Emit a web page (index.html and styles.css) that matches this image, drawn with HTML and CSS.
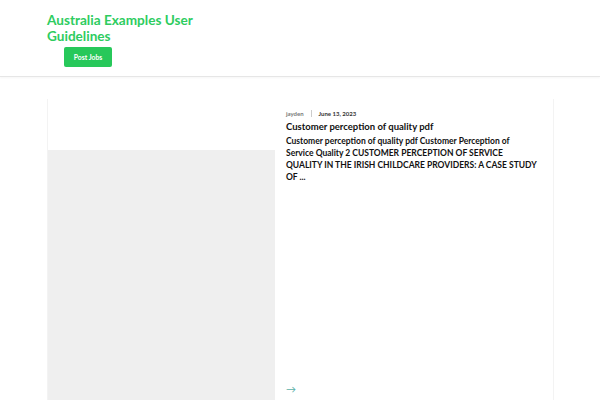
FILE: index.html
```html
<!DOCTYPE HTML>
<html lang="en">
  <head>
    <title>Australia Examples User Guidelines</title>
    <meta charset="utf-8">
    <link rel="stylesheet" href="styles.css">
  </head>
  <body>

  <header class="site-header">
    <div class="brand">
      <a class="brand-title" href="#">Australia Examples User Guidelines</a>
      <a class="btn-post" href="#">Post Jobs</a>
    </div>
  </header>

  <main class="content">
    <article class="post-card">
      <div class="post-thumb">
        <div class="thumb-img"></div>
      </div>
      <div class="post-body">
        <div class="post-meta">
          <span class="author">jayden</span>
          <span class="sep"></span>
          <span class="date">June 13, 2023</span>
        </div>
        <h2 class="post-title"><a href="#">Customer perception of quality pdf</a></h2>
        <p class="post-excerpt">Customer perception of quality pdf Customer Perception of Service Quality 2 CUSTOMER PERCEPTION OF SERVICE QUALITY IN THE IRISH CHILDCARE PROVIDERS: A CASE STUDY OF ...</p>
        <a class="read-more" href="#">&rarr;</a>
      </div>
    </article>
  </main>

  </body>
</html>
```

FILE: styles.css
```css
html {
  height: 100%;
}
body {
  margin: 0;
  padding: 0;
  background: #ffffff;
  color: #111;
  font-family: Lato, "Noto Sans", sans-serif;
  height: 100%;
  overflow: hidden;
}

a {
  text-decoration: none;
}

.site-header {
  height: 76px;
  border-bottom: 1px solid #e6e6e6;
  box-shadow: 0 1px 2px rgba(0,0,0,0.04);
}

.brand {
  padding: 12px 0 0 47px;
  width: 200px;
}

.brand-title {
  display: block;
  color: #2ecc5f;
  font-weight: 700;
  font-size: 13.6px;
  line-height: 16px;
}

.btn-post {
  display: inline-block;
  margin: 0 0 0 17px;
  width: 48px;
  height: 20px;
  line-height: 20px;
  text-align: center;
  background: #27c85a;
  color: #fff;
  font-size: 6.8px;
  font-weight: 700;
  border-radius: 2px;
}

.content {
  padding: 22px 47px 0 47px;
}

.post-card {
  display: flex;
  width: 505px;
  height: 320px;
  border-left: 1px solid #f3f3f3;
  border-right: 1px solid #f3f3f3;
}

.post-thumb {
  width: 227px;
  padding-top: 51px;
}

.thumb-img {
  background: #efefef;
  height: 100%;
}

.post-body {
  flex: 1;
  padding: 9px 15px 0 11px;
  display: flex;
  flex-direction: column;
}

.post-meta {
  display: flex;
  align-items: center;
  font-size: 6px;
  font-weight: 700;
  color: #777;
  height: 10px;
}

.post-meta .date {
  color: #333;
}

.sep {
  display: inline-block;
  width: 1px;
  height: 7px;
  background: #ccc;
  margin: 0 7px;
}

.post-title {
  margin: 2px 0 0 0;
  font-size: 9.5px;
  line-height: 13px;
  font-weight: 700;
}

.post-title a {
  color: #111;
}

.post-excerpt {
  margin: 2px 0 0 0;
  font-size: 8.5px;
  line-height: 12px;
  font-weight: 700;
  color: #111;
}

.read-more {
  margin-top: auto;
  margin-bottom: 24px;
  color: #5ab0a8;
  font-size: 10px;
}
```
